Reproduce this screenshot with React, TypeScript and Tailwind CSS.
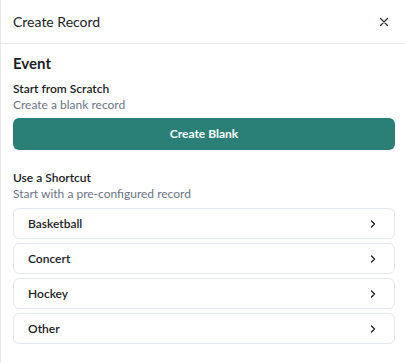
import React from 'react'

const shortcuts = ['Basketball', 'Concert', 'Hockey', 'Other']

const ChevronRight = () => (
  <svg width="12" height="12" viewBox="0 0 24 24" fill="none" stroke="currentColor" strokeWidth="2.5" strokeLinecap="round" strokeLinejoin="round">
    <path d="M9 6l6 6-6 6" />
  </svg>
)

const CloseIcon = () => (
  <svg width="12" height="12" viewBox="0 0 24 24" fill="none" stroke="currentColor" strokeWidth="2.5" strokeLinecap="round">
    <path d="M5 5l14 14M19 5L5 19" />
  </svg>
)

export default function App() {
  return (
    <div className="w-[405px] h-[363px] bg-white border-l border-[#e6e9ee] text-[#1a1d24] font-['Lato',sans-serif]">
      {/* Header */}
      <div className="h-[44px] flex items-center justify-between pl-[12px] pr-[15px] border-b border-[#e8ebf0]">
        <span className="text-[14px]">Create Record</span>
        <button className="text-[#2a2f3a]">
          <CloseIcon />
        </button>
      </div>

      <div className="pl-[12px] pr-[10px] pt-[9px]">
        <h2 className="text-[15px] font-bold leading-[20px]">Event</h2>

        <div className="mt-[8px]">
          <p className="text-[12px] font-semibold leading-[16px]">Start from Scratch</p>
          <p className="text-[12px] text-[#6b7587] leading-[16px]">Create a blank record</p>
        </div>

        <button className="mt-[5px] w-full h-[32px] rounded-[6px] bg-[#2a7f77] text-white text-[12px] font-bold">
          Create Blank
        </button>

        <div className="mt-[20px]">
          <p className="text-[12px] font-semibold leading-[16px]">Use a Shortcut</p>
          <p className="text-[12px] text-[#6b7587] leading-[16px]">Start with a pre-configured record</p>
        </div>

        <ul className="mt-[6px] flex flex-col gap-[4px]">
          {shortcuts.map((name) => (
            <li
              key={name}
              className="h-[31px] flex items-center justify-between pl-[14px] pr-[15px] rounded-[6px] border border-[#e4e8ef] text-[12px] font-semibold"
            >
              <span>{name}</span>
              <ChevronRight />
            </li>
          ))}
        </ul>
      </div>
    </div>
  )
}
